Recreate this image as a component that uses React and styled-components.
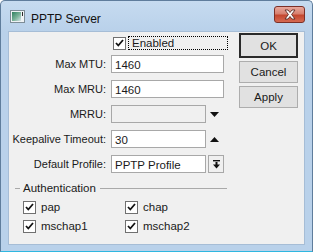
import React from "react";
import styled, { createGlobalStyle } from "styled-components";

const Global = createGlobalStyle`
  html, body { margin: 0; padding: 0; background: #ffffff; }
  body { font-family: "Liberation Sans", Arial, sans-serif; }
`;

const fields = [
  { label: "Max MTU:", value: "1460", width: 113 },
  { label: "Max MRU:", value: "1460", width: 113 },
  { label: "MRRU:", value: "", width: 95, disabled: true, after: "down" },
  { label: "Keepalive Timeout:", value: "30", width: 95, after: "up" },
  { label: "Default Profile:", value: "PPTP Profile", width: 95, after: "select" },
];

const auth = ["pap", "chap", "mschap1", "mschap2"];

const WindowIcon = () => (
  <svg width="15" height="13" viewBox="0 0 15 13">
    <defs>
      <linearGradient id="wi" x1="0" y1="0" x2="1" y2="1">
        <stop offset="0" stopColor="#2f7f5e" />
        <stop offset="0.55" stopColor="#7bb39a" />
        <stop offset="1" stopColor="#d8e3e8" />
      </linearGradient>
    </defs>
    <rect x="0.5" y="0.5" width="14" height="12" fill="#eef2f4" stroke="#7d8c96" />
    <rect x="2" y="2" width="9" height="9" fill="url(#wi)" />
    <rect x="12" y="2" width="1" height="4" fill="#2a2a2a" />
  </svg>
);

const CloseGlyph = () => (
  <svg width="14" height="11" viewBox="0 0 14 11">
    <path
      d="M2 1 L5 1 L7 3.5 L9 1 L12 1 L8.6 5.5 L12 10 L9 10 L7 7.5 L5 10 L2 10 L5.4 5.5 Z"
      fill="#ffffff"
      stroke="#5b2a24"
      strokeWidth="0.9"
      strokeLinejoin="round"
    />
  </svg>
);

const Check = () => (
  <svg width="9" height="8" viewBox="0 0 9 8">
    <path d="M1 4 L3.3 6.5 L8 1" fill="none" stroke="#111" strokeWidth="1.8" />
  </svg>
);

const Triangle = ({ up }) => (
  <svg width="9" height="5" viewBox="0 0 9 5">
    <path d={up ? "M0 5 L4.5 0 L9 5 Z" : "M0 0 L9 0 L4.5 5 Z"} fill="#111" />
  </svg>
);

const SelectGlyph = () => (
  <svg width="9" height="9" viewBox="0 0 9 9">
    <rect x="1" y="0" width="7" height="1.4" fill="#111" />
    <rect x="3.5" y="2" width="2" height="3" fill="#111" />
    <path d="M1 4.5 L8 4.5 L4.5 8.5 Z" fill="#111" />
  </svg>
);

const CheckBox = ({ checked }) => <Box>{checked && <Check />}</Box>;

export default function App() {
  return (
    <>
      <Global />
      <Window>
        <TitleBar>
          <WindowIcon />
          <Title>PPTP Server</Title>
          <CloseButton>
            <CloseGlyph />
          </CloseButton>
        </TitleBar>
        <Client>
          <Form>
            <EnabledRow>
              <Spacer />
              <CheckBox checked />
              <Focus>Enabled</Focus>
            </EnabledRow>
            {fields.map((f) => (
              <Row key={f.label}>
                <Label>{f.label}</Label>
                <Input $width={f.width} $disabled={f.disabled}>
                  {f.value}
                </Input>
                {f.after === "down" && (
                  <Arrow>
                    <Triangle />
                  </Arrow>
                )}
                {f.after === "up" && (
                  <Arrow>
                    <Triangle up />
                  </Arrow>
                )}
                {f.after === "select" && (
                  <SelectButton>
                    <SelectGlyph />
                  </SelectButton>
                )}
              </Row>
            ))}
            <Group>
              <Legend>
                <Dash />
                <LegendText>Authentication</LegendText>
                <Line />
              </Legend>
              <Checks>
                {auth.map((a) => (
                  <CheckItem key={a}>
                    <CheckBox checked />
                    <span>{a}</span>
                  </CheckItem>
                ))}
              </Checks>
            </Group>
          </Form>
          <Buttons>
            <Button $default>OK</Button>
            <Button>Cancel</Button>
            <Button>Apply</Button>
          </Buttons>
        </Client>
      </Window>
    </>
  );
}

const Window = styled.div`
  width: 313px;
  height: 252px;
  box-sizing: border-box;
  display: flex;
  flex-direction: column;
  background: linear-gradient(#c6dbf0, #b9d1ea 30px);
  border: 1px solid #5f7d9c;
  border-bottom-color: #2fb7e0;
  border-radius: 5px 5px 0 0;
  padding: 0 7px 6px 7px;
  font-size: 11px;
  color: #000;
`;

const TitleBar = styled.div`
  height: 30px;
  display: flex;
  align-items: center;
  padding-left: 2px;
  padding-top: 1px;
  box-sizing: border-box;
`;

const Title = styled.div`
  font-size: 12px;
  margin-left: 6px;
  margin-top: 5px;
  color: #111;
`;

const CloseButton = styled.div`
  margin-left: auto;
  margin-top: -4px;
  width: 31px;
  height: 17px;
  box-sizing: border-box;
  border: 1px solid #7c3027;
  border-radius: 3px;
  background: linear-gradient(#e8a89c, #d7806f 45%, #c4472f 55%, #d56a52);
  display: flex;
  align-items: center;
  justify-content: center;
`;

const Client = styled.div`
  flex: 1;
  display: flex;
  background: #f0f0f0;
  border: 1px solid #a6bdd6;
  color: #1a1a1a;
`;

const Form = styled.div`
  width: 224px;
  display: flex;
  flex-direction: column;
  gap: 7px;
  padding-top: 4px;
`;

const Row = styled.div`
  display: flex;
  align-items: center;
  height: 18px;
  gap: 5px;
`;

const EnabledRow = styled(Row)`
  height: 14px;
  margin-bottom: -2px;
  gap: 0;
`;

const Spacer = styled.div`
  width: 104px;
`;

const Label = styled.div`
  width: 97px;
  text-align: right;
  white-space: nowrap;
`;

const Input = styled.div`
  width: ${(p) => p.$width}px;
  height: 18px;
  box-sizing: border-box;
  border: 1px solid #a8a8a8;
  background: ${(p) => (p.$disabled ? "#f0f0f0" : "#ffffff")};
  padding: 1px 3px 0;
  display: flex;
  align-items: center;
  font-size: 11.5px;
`;

const Arrow = styled.div`
  width: 18px;
  display: flex;
  justify-content: center;
  margin-left: -6px;
`;

const SelectButton = styled.div`
  width: 16px;
  height: 18px;
  box-sizing: border-box;
  border: 1px solid #a8a8a8;
  background: #f0f0f0;
  margin-left: -3px;
  display: flex;
  align-items: center;
  justify-content: center;
`;

const Box = styled.div`
  width: 13px;
  height: 13px;
  box-sizing: border-box;
  border: 1px solid #707070;
  background: #fff;
  display: flex;
  align-items: center;
  justify-content: center;
  flex-shrink: 0;
`;

const Focus = styled.div`
  margin-left: 2px;
  width: 100px;
  height: 14px;
  box-sizing: border-box;
  border: 1px dotted #000;
  padding-left: 3px;
  display: flex;
  align-items: center;
  font-size: 11.5px;
`;

const Group = styled.div`
  margin: 1px 0 0 6px;
  width: 212px;
`;

const Legend = styled.div`
  display: flex;
  align-items: center;
  height: 14px;
`;

const Dash = styled.div`
  width: 5px;
  height: 1px;
  background: #a9a9a9;
`;

const LegendText = styled.span`
  margin: 0 4px 0 3px;
  font-size: 11.5px;
`;

const Line = styled.div`
  flex: 1;
  height: 1px;
  background: #a9a9a9;
`;

const Checks = styled.div`
  display: grid;
  grid-template-columns: 102px 102px;
  row-gap: 5px;
  padding: 5px 0 0 8px;
`;

const CheckItem = styled.div`
  display: flex;
  align-items: center;
  gap: 5px;
  height: 14px;
  font-size: 11.5px;
`;

const Buttons = styled.div`
  margin-left: auto;
  margin-right: 6px;
  padding-top: 1px;
  display: flex;
  flex-direction: column;
  gap: 3px;
`;

const Button = styled.div`
  width: 59px;
  height: ${(p) => (p.$default ? 25 : 22)}px;
  box-sizing: border-box;
  border: ${(p) => (p.$default ? "2px solid #2a2a2a" : "1px solid #adadad")};
  background: #e1e1e1;
  display: flex;
  align-items: center;
  justify-content: center;
  font-size: 11.5px;
`;
